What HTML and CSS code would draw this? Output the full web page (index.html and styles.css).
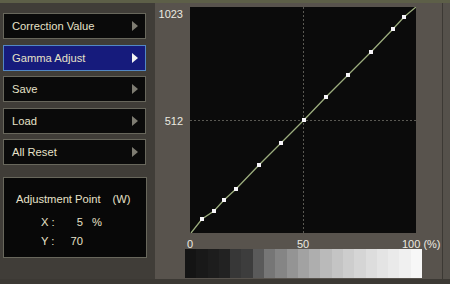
FILE: index.html
```html
<!DOCTYPE html>
<html>
<head>
    <title>Gamma Adjust</title>
    <link rel="stylesheet" href="styles.css">
</head>
<body>
    <div class="screen">
        <div class="side">
            <div class="menu">
                <div class="menu-item"><span>Correction Value</span><i class="arrow"></i></div>
                <div class="menu-item active"><span>Gamma Adjust</span><i class="arrow"></i></div>
                <div class="menu-item"><span>Save</span><i class="arrow"></i></div>
                <div class="menu-item"><span>Load</span><i class="arrow"></i></div>
                <div class="menu-item"><span>All Reset</span><i class="arrow"></i></div>
            </div>

            <div class="point-box">
                <div class="point-title"><span>Adjustment Point</span><span class="mode">(W)</span></div>
                <div class="point-grid">
                    <span>X :</span><span class="val">5</span><span class="unit">%</span>
                    <span>Y :</span><span class="val">70</span><span class="unit"></span>
                </div>
            </div>
        </div>

        <div class="graph">
            <div class="y-axis">
                <span class="y-label y-top">1023</span>
                <span class="y-label y-mid">512</span>
            </div>

            <svg class="plot" width="226" height="226" viewBox="0 0 226 226">
                <line class="grid-line" x1="0" y1="113.5" x2="226" y2="113.5"/>
                <line class="grid-line" x1="113.5" y1="0" x2="113.5" y2="226"/>
                <polyline class="curve" points="1,226 12,212 24,204 34,193 46,182 69,158 91,136 114,113 136,90 158,68 181,45 203,22 214,10 226,0"/>
                <g class="marks">
                    <rect x="10" y="210" width="4" height="4"/>
                    <rect x="22" y="202" width="4" height="4"/>
                    <rect x="32" y="191" width="4" height="4"/>
                    <rect x="44" y="180" width="4" height="4"/>
                    <rect x="67" y="156" width="4" height="4"/>
                    <rect x="89" y="134" width="4" height="4"/>
                    <rect x="112" y="111" width="4" height="4"/>
                    <rect x="134" y="88" width="4" height="4"/>
                    <rect x="156" y="66" width="4" height="4"/>
                    <rect x="179" y="43" width="4" height="4"/>
                    <rect x="201" y="20" width="4" height="4"/>
                    <rect x="212" y="8" width="4" height="4"/>
                </g>
            </svg>

            <div class="x-axis">
                <span class="x-label x-min">0</span>
                <span class="x-label x-mid">50</span>
                <span class="x-label x-max">100 (%)</span>
            </div>

            <div class="ramp"></div>
        </div>
        <div class="edge"></div>
    </div>
</body>
</html>
```

FILE: styles.css
```css
body {
    margin: 0;
    width: 450px;
    height: 284px;
    overflow: hidden;
    background: #3c3934;
    font-family: "Liberation Sans", Arial, sans-serif;
    font-size: 11.2px;
    color: #e6e1c8;
}
.screen {
    display: flex;
    height: 276px;
    border-top: 3px solid #5d5f48;
    background: #403d38;
}
.side {
    width: 152px;
    padding: 10px 0 0 3px;
}
.menu {
    display: flex;
    flex-direction: column;
    gap: 5.5px;
    width: 143px;
}
.menu-item {
    box-sizing: border-box;
    height: 26px;
    display: flex;
    align-items: center;
    justify-content: space-between;
    padding: 0 7px 0 8px;
    background: #0a0a0a;
    border: 1px solid #68675c;
}
.menu-item.active {
    background: #161b7c;
    border-color: #5287c4;
}
.arrow {
    width: 0;
    height: 0;
    border-left: 6px solid #7e7c72;
    border-top: 5px solid transparent;
    border-bottom: 5px solid transparent;
}
.active .arrow {
    border-left-color: #f4f4f4;
}
.point-box {
    box-sizing: border-box;
    width: 144px;
    height: 81px;
    margin-top: 12px;
    padding-top: 14px;
    background: #080808;
    border: 1px solid #68675c;
}
.point-title {
    display: flex;
    padding-left: 12px;
    line-height: 14px;
}
.point-title .mode {
    margin-left: 12px;
}
.point-grid {
    display: grid;
    grid-template-columns: 22px 20px auto;
    grid-auto-rows: 19px;
    align-items: center;
    margin-top: 6px;
    padding-left: 37px;
}
.point-grid .val {
    text-align: right;
}
.point-grid .unit {
    padding-left: 9px;
}
.graph {
    display: grid;
    grid-template-columns: 35px 226px 27px;
    grid-template-rows: 226px 16px 29px;
    width: 288px;
    height: 276px;
    box-sizing: border-box;
    padding-top: 4px;
    background: #58534d;
    border-right: 1px solid #3c3934;
}
.edge {
    flex: 1;
    background: #55514b;
}
.y-axis {
    position: relative;
}
.y-label {
    position: absolute;
    right: 7px;
    line-height: 14px;
    font-size: 11px;
    color: #eceae0;
}
.y-top { top: 0; }
.y-mid { top: 107px; }
.plot {
    display: block;
    background: #0b0b0b;
}
.grid-line {
    stroke: #5a5953;
    stroke-width: 1;
    stroke-dasharray: 2 2;
}
.curve {
    fill: none;
    stroke: #9cad7e;
    stroke-width: 1.3;
}
.marks rect {
    fill: #f6f4f8;
}
.x-axis {
    grid-column: 1 / 4;
    position: relative;
}
.x-label {
    position: absolute;
    line-height: 22px;
    font-size: 11px;
    color: #eceae0;
}
.x-min { left: 32px; }
.x-mid { left: 142px; }
.x-max { left: 247px; }
.ramp {
    grid-column: 1 / 4;
    width: 237px;
    margin-left: 30px;
    background: linear-gradient(to right,
        #141414 0 4.76%, #191919 4.76% 9.52%, #1d1d1d 9.52% 14.29%, #222 14.29% 19.05%,
        #373737 19.05% 23.81%, #3d3d3d 23.81% 28.57%, #5a5a5a 28.57% 33.33%,
        #767676 33.33% 38.1%, #858585 38.1% 42.86%, #949494 42.86% 47.62%,
        #a2a2a2 47.62% 52.38%, #aeaeae 52.38% 57.14%, #bababa 57.14% 61.9%,
        #c4c4c4 61.9% 66.67%, #cdcdcd 66.67% 71.43%, #d5d5d5 71.43% 76.19%,
        #dddddd 76.19% 80.95%, #e4e4e4 80.95% 85.71%, #eaeaea 85.71% 90.48%,
        #f0f0f0 90.48% 95.24%, #f7f7f7 95.24% 100%);
}
```
